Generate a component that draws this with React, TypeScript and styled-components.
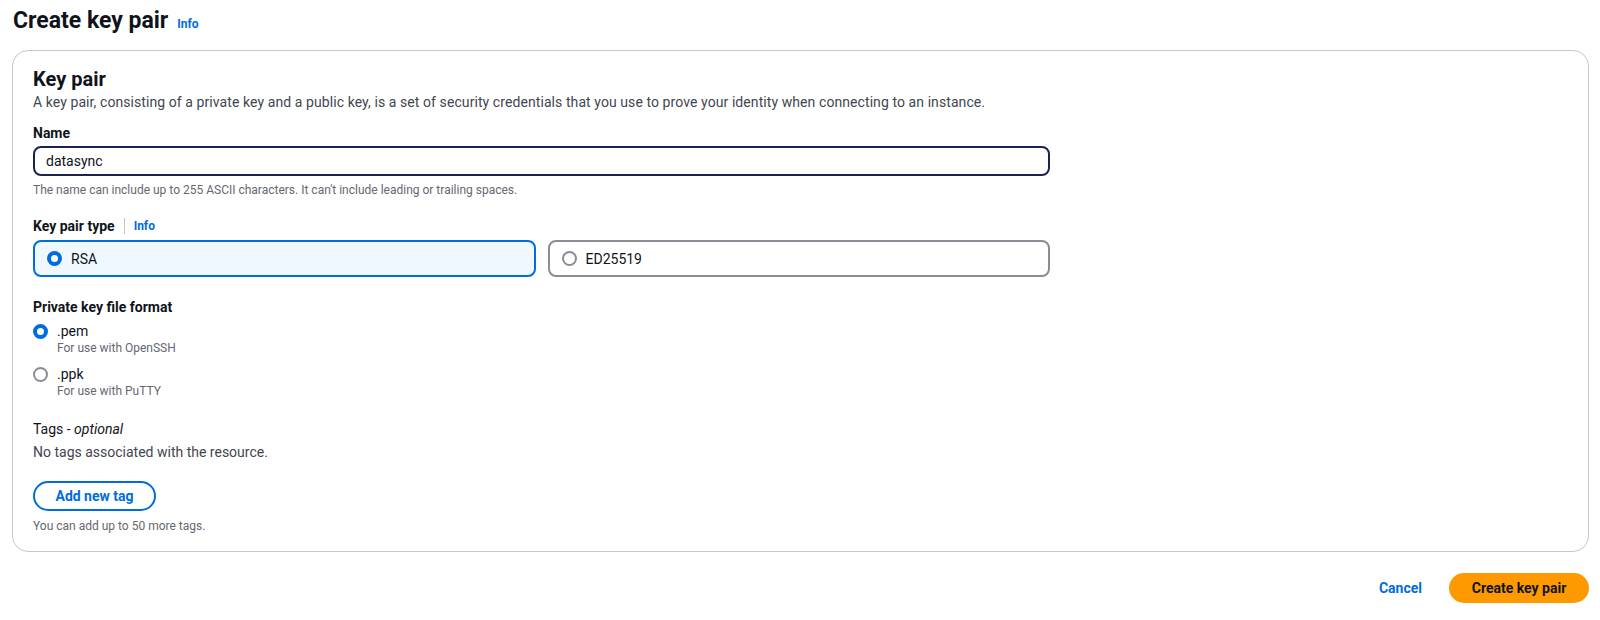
import React from "react";
import styled, { createGlobalStyle } from "styled-components";

const GlobalStyle = createGlobalStyle`
  html, body { margin: 0; padding: 0; background: #ffffff; }
  body { font-family: Roboto, "Liberation Sans", Arial, sans-serif; color: #0f141a; }
  * { box-sizing: border-box; }
`;

const Page = styled.div`
  display: flex;
  flex-direction: column;
  padding: 7px 11px 0 12px;
`;

const Header = styled.div`
  display: flex;
  align-items: baseline;
  gap: 9px;
  height: 28px;
  padding-left: 1px;
`;

const Title = styled.h1`
  margin: 0;
  font-size: 23px;
  line-height: 28px;
  font-weight: 700;
  color: #0f141a;
`;

const InfoLink = styled.a`
  font-size: 12px;
  font-weight: 700;
  color: #006ce0;
  text-decoration: none;
  cursor: pointer;
`;

const Card = styled.section`
  margin-top: 15px;
  border: 1px solid #c6c6cd;
  border-radius: 16px;
  padding: 16px 20px 17px 20px;
  display: flex;
  flex-direction: column;
`;

const CardTitle = styled.h2`
  margin: 0;
  font-size: 20px;
  line-height: 24px;
  font-weight: 700;
`;

const CardDesc = styled.p`
  margin: 1px 0 0 0;
  font-size: 14px;
  line-height: 20px;
  letter-spacing: 0.08px;
  color: #424650;
`;

const Field = styled.div<{ $top: number }>`
  display: flex;
  flex-direction: column;
  margin-top: ${(p) => p.$top}px;
  width: 1017px;
`;

const LabelRow = styled.div`
  display: flex;
  align-items: center;
  gap: 9px;
  height: 20px;
`;

const Label = styled.span`
  font-size: 14px;
  line-height: 20px;
  font-weight: 700;
`;

const Divider = styled.span`
  width: 1px;
  height: 16px;
  background: #c6c6cd;
`;

const Input = styled.input`
  margin-top: 3px;
  height: 30px;
  width: 100%;
  border: 2px solid #1a2354;
  border-radius: 8px;
  padding: 0 11px;
  font-family: inherit;
  font-size: 14px;
  color: #0f141a;
  outline: none;
  background: #ffffff;
`;

const Hint = styled.div<{ $top?: number }>`
  margin-top: ${(p) => p.$top ?? 6}px;
  font-size: 12px;
  line-height: 16px;
  color: #656871;
`;

const TileGrid = styled.div`
  margin-top: 4px;
  display: grid;
  grid-template-columns: 1fr 1fr;
  gap: 12px;
`;

const Tile = styled.label<{ $checked: boolean }>`
  display: flex;
  align-items: center;
  gap: 9px;
  height: 37px;
  padding: 0 12px;
  border-radius: 8px;
  border: 2px solid ${(p) => (p.$checked ? "#006ce0" : "#8c8c94")};
  background: ${(p) => (p.$checked ? "#f0f8ff" : "#ffffff")};
  font-size: 14px;
  cursor: pointer;
`;

const RadioDot = styled.span<{ $checked: boolean }>`
  flex: none;
  width: 15px;
  height: 15px;
  border-radius: 50%;
  border: ${(p) => (p.$checked ? "4px solid #006ce0" : "2px solid #8c8c94")};
  background: #ffffff;
`;

const RadioList = styled.div`
  margin-top: 5px;
  display: flex;
  flex-direction: column;
  gap: 9px;
`;

const RadioOption = styled.div`
  display: grid;
  grid-template-columns: 16px 1fr;
  column-gap: 8px;
  align-items: center;
`;

const RadioLabel = styled.span`
  font-size: 14px;
  line-height: 18px;
`;

const RadioHint = styled.span`
  grid-column: 2;
  font-size: 12px;
  line-height: 16px;
  color: #656871;
`;

const PlainLabel = styled.span`
  font-size: 14px;
  line-height: 20px;
  color: #0f141a;
  em { font-style: italic; }
`;

const BodyText = styled.span`
  margin-top: 3px;
  font-size: 14px;
  line-height: 20px;
  color: #424650;
`;

const OutlineButton = styled.button`
  margin-top: 19px;
  align-self: flex-start;
  height: 30px;
  width: 123px;
  border: 2px solid #006ce0;
  border-radius: 20px;
  background: #ffffff;
  color: #006ce0;
  font-family: inherit;
  font-size: 14px;
  font-weight: 700;
  cursor: pointer;
`;

const Footer = styled.div`
  display: flex;
  justify-content: flex-end;
  align-items: center;
  gap: 27px;
  margin-top: 21px;
`;

const LinkButton = styled.button`
  border: none;
  background: transparent;
  color: #006ce0;
  font-family: inherit;
  font-size: 14px;
  font-weight: 700;
  padding: 0;
  cursor: pointer;
`;

const PrimaryButton = styled.button`
  height: 30px;
  width: 140px;
  border: none;
  border-radius: 20px;
  background: #ff9900;
  color: #0f141a;
  font-family: inherit;
  font-size: 14px;
  font-weight: 700;
  cursor: pointer;
`;

export default function App() {
  return (
    <>
      <GlobalStyle />
      <Page>
        <Header>
          <Title>Create key pair</Title>
          <InfoLink>Info</InfoLink>
        </Header>
        <Card>
          <CardTitle>Key pair</CardTitle>
          <CardDesc>
            A key pair, consisting of a private key and a public key, is a set of security credentials that you use to
            prove your identity when connecting to an instance.
          </CardDesc>

          <Field $top={11}>
            <LabelRow>
              <Label>Name</Label>
            </LabelRow>
            <Input defaultValue="datasync" />
            <Hint>The name can include up to 255 ASCII characters. It can't include leading or trailing spaces.</Hint>
          </Field>

          <Field $top={18}>
            <LabelRow>
              <Label>Key pair type</Label>
              <Divider />
              <InfoLink>Info</InfoLink>
            </LabelRow>
            <TileGrid>
              <Tile $checked>
                <RadioDot $checked />
                RSA
              </Tile>
              <Tile $checked={false}>
                <RadioDot $checked={false} />
                ED25519
              </Tile>
            </TileGrid>
          </Field>

          <Field $top={20}>
            <LabelRow>
              <Label>Private key file format</Label>
            </LabelRow>
            <RadioList>
              <RadioOption>
                <RadioDot $checked />
                <RadioLabel>.pem</RadioLabel>
                <RadioHint>For use with OpenSSH</RadioHint>
              </RadioOption>
              <RadioOption>
                <RadioDot $checked={false} />
                <RadioLabel>.ppk</RadioLabel>
                <RadioHint>For use with PuTTY</RadioHint>
              </RadioOption>
            </RadioList>
          </Field>

          <Field $top={20}>
            <PlainLabel>
              Tags - <em>optional</em>
            </PlainLabel>
            <BodyText>No tags associated with the resource.</BodyText>
            <OutlineButton>Add new tag</OutlineButton>
            <Hint $top={7}>You can add up to 50 more tags.</Hint>
          </Field>
        </Card>
        <Footer>
          <LinkButton>Cancel</LinkButton>
          <PrimaryButton>Create key pair</PrimaryButton>
        </Footer>
      </Page>
    </>
  );
}
